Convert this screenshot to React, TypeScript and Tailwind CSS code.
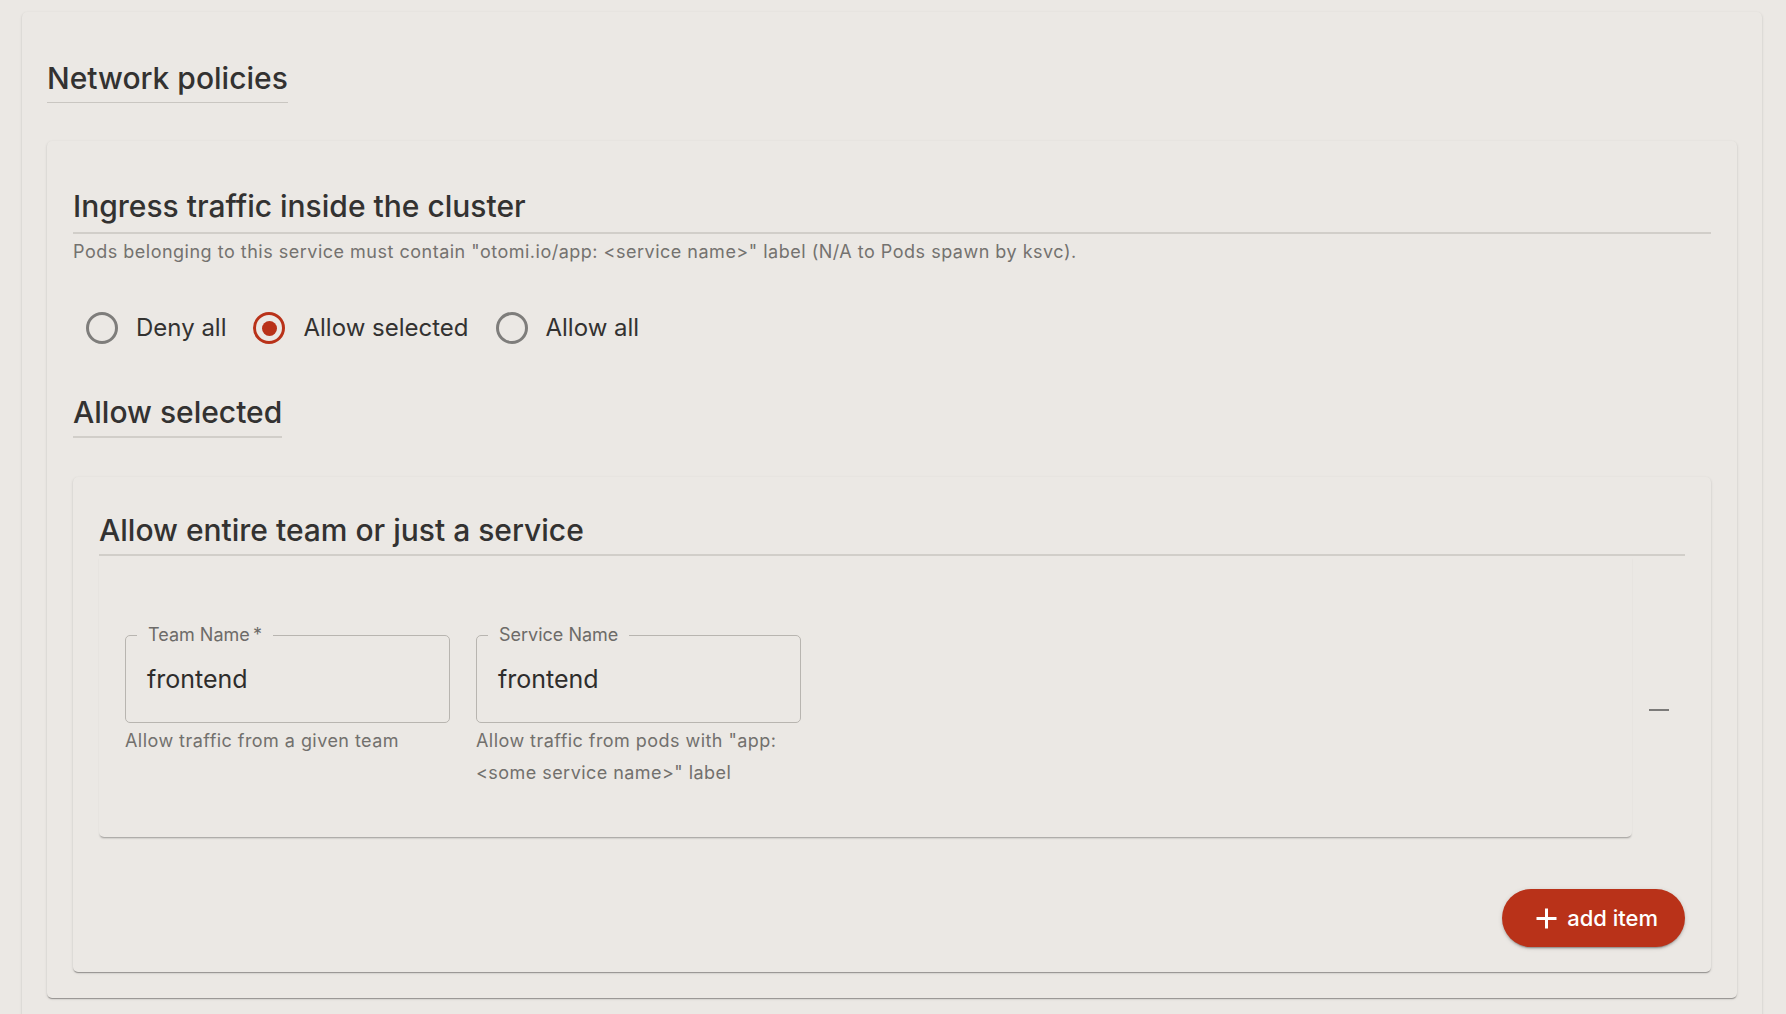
import React from "react";

const shadowCard =
  "shadow-[0_2px_1px_-1px_rgba(0,0,0,0.2),0_1px_1px_0_rgba(0,0,0,0.14),0_1px_3px_0_rgba(0,0,0,0.12)]";

function Radio({ label, checked }: { label: string; checked?: boolean }) {
  return (
    <div className="flex items-center h-[32px]">
      <span
        className={
          checked
            ? "flex items-center justify-center w-[32px] h-[32px] rounded-full border-[3px] border-[#b93219]"
            : "flex items-center justify-center w-[32px] h-[32px] rounded-full border-[3px] border-[#7e7d7b]"
        }
      >
        {checked ? <span className="w-[15px] h-[15px] rounded-full bg-[#b93219]" /> : null}
      </span>
      <span className="ml-[18px] text-[24px] leading-[32px] text-[#333231]">{label}</span>
    </div>
  );
}

function Field({
  label,
  value,
  helper,
}: {
  label: React.ReactNode;
  value: string;
  helper: React.ReactNode;
}) {
  return (
    <div className="w-[325px]">
      <div className="relative h-[88px] rounded-[5px] border border-[#b8b5b0] flex items-center pl-[21px]">
        <span className="absolute left-[11px] top-[-13px] px-[11px] bg-[#ebe8e4] text-[18px] leading-[24px] text-[#6d6b68]">
          {label}
        </span>
        <span className="text-[25px] leading-[32px] text-[#2e2d2c]">{value}</span>
      </div>
      <div className="mt-[2px] text-[18px] leading-[32px] tracking-[0.45px] text-[#72706d]">{helper}</div>
    </div>
  );
}

export default function App() {
  return (
    <div
      className="min-h-screen bg-[#ebe8e4] pt-[12px] pl-[22px] pr-[24px] overflow-hidden"
      style={{ fontFamily: "Inter, 'Noto Sans', sans-serif" }}
    >
      <div className={`rounded-[5px] bg-[#ebe8e4] ${shadowCard} px-[25px] pt-[46px] pb-[26px]`}>
        <div>
          <h1 className="inline-block text-[30px] leading-[40px] pb-[4px] border-b border-[#c9c6c1] text-[#333231] font-medium">
            Network policies
          </h1>
        </div>

        <div className={`mt-[38px] rounded-[5px] bg-[#ebe8e4] ${shadowCard} px-[26px] pt-[47px] pb-[26px]`}>
          <h2 className="text-[30px] leading-[36px] pb-[8px] border-b-2 border-[#d1cec9] text-[#333231] font-medium">
            Ingress traffic inside the cluster
          </h2>
          <p className="mt-[6px] text-[18px] leading-[24px] tracking-[0.5px] text-[#74726f]">
            Pods belonging to this service must contain "otomi.io/app: &lt;service name&gt;" label (N/A to Pods spawn by ksvc).
          </p>

          <div className="mt-[48px] pl-[13px] flex items-center gap-[27px]">
            <Radio label="Deny all" />
            <Radio label="Allow selected" checked />
            <Radio label="Allow all" />
          </div>

          <div className="mt-[50px]">
            <h3 className="inline-block text-[30px] leading-[36px] pb-[6px] border-b-2 border-[#d1cec9] text-[#333231] font-medium">
              Allow selected
            </h3>
          </div>

          <div className={`mt-[39px] rounded-[5px] bg-[#ebe8e4] ${shadowCard} px-[26px] pt-[35px] pb-[25px]`}>
            <h4 className="text-[30px] leading-[36px] pb-[6px] border-b-2 border-[#d1cec9] text-[#333231] font-medium">
              Allow entire team or just a service
            </h4>

            <div className="flex items-start">
              <div className="flex-1 rounded-b-[5px] bg-[#ebe8e4] shadow-[0_2px_2px_-1px_rgba(0,0,0,0.35)] px-[26px] pt-[79px] pb-[48px]">
                <div className="flex items-start gap-[26px]">
                  <Field
                    label={<>Team Name{"\u2009"}*</>}
                    value="frontend"
                    helper="Allow traffic from a given team"
                  />
                  <Field
                    label="Service Name"
                    value="frontend"
                    helper={
                      <>
                        Allow traffic from pods with "app:
                        <br />
                        &lt;some service name&gt;" label
                      </>
                    }
                  />
                </div>
              </div>
              <div className="w-[53px] flex justify-center pt-[153px]">
                <span className="block w-[20px] h-[2px] bg-[#7c7b79]" />
              </div>
            </div>

            <div className="mt-[52px] flex justify-end">
              <button className="h-[58px] rounded-full bg-[#b93219] pl-[33px] pr-[27px] flex items-center gap-[9px] text-white text-[22px] font-medium shadow-[0_3px_1px_-2px_rgba(0,0,0,0.2),0_2px_2px_0_rgba(0,0,0,0.14),0_1px_5px_0_rgba(0,0,0,0.12)]">
                <svg width="23" height="23" viewBox="0 0 23 23" fill="none">
                  <path d="M11.5 1.5v20M1.5 11.5h20" stroke="white" strokeWidth="3" />
                </svg>
                <span>add item</span>
              </button>
            </div>
          </div>
        </div>
      </div>
    </div>
  );
}
